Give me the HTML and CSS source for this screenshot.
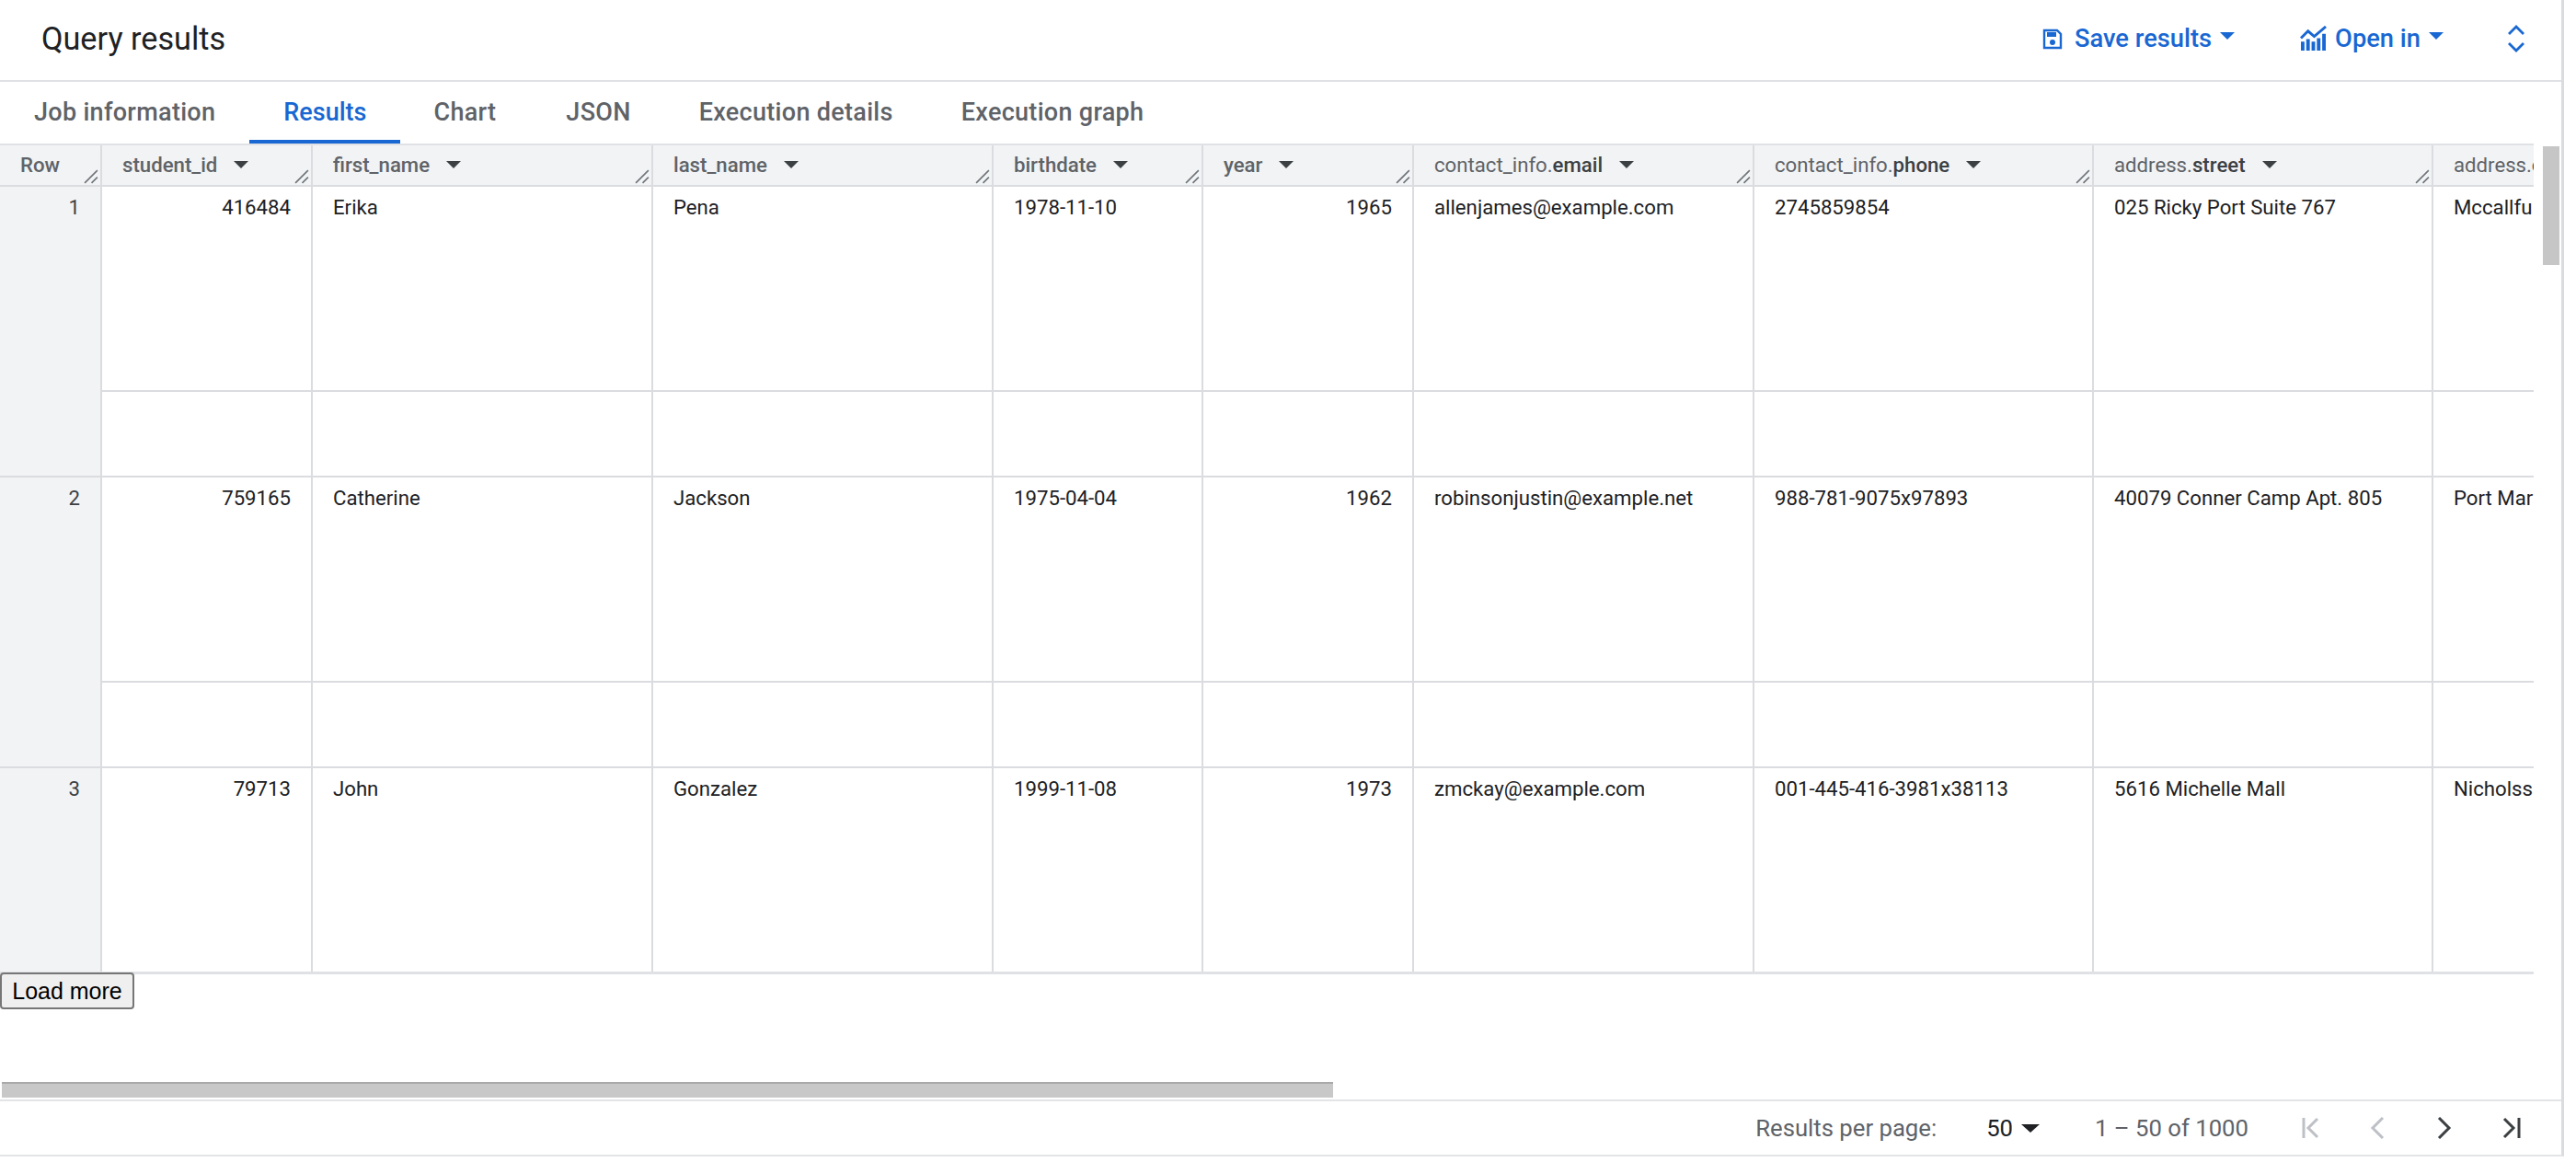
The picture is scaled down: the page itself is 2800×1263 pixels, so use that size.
FILE: index.html
```html
<!DOCTYPE html>
<html lang="en">
<head>
<meta charset="utf-8">
<title>Query results</title>
<link rel="stylesheet" href="styles.css">
</head>
<body>
<svg class="defs" width="0" height="0" aria-hidden="true">
  <symbol id="grip" viewBox="0 0 16 16"><path d="M1 15 14 2M8 15l6-6" fill="none" stroke="#70757a" stroke-width="1.5"/></symbol>
</svg>
<main class="panel">
  <header class="topbar">
    <h1 class="title">Query results</h1>
    <div class="actions">
      <button class="action action-save">
        <svg class="ic-save" viewBox="0 0 22 24"><path fill="none" stroke="#1967d2" stroke-width="2.4" d="M2 3h14l4 4v15H2z"/><path fill="#1967d2" d="M5 5h10v5H5z"/><circle cx="11" cy="16" r="3" fill="#1967d2"/></svg>
        <span>Save results</span><i class="caret"></i>
      </button>
      <button class="action action-open">
        <svg class="ic-chart" viewBox="0 0 30 28"><path fill="#1967d2" d="M1 18h4v10H1zM7 15h4v13H7zM13 18h4v10h-4zM19 14h4v14h-4zM25 9h4v19h-4z"/><path fill="none" stroke="#1967d2" stroke-width="3" d="m1 14 8-8 7 6L29 1"/></svg>
        <span>Open in</span><i class="caret"></i>
      </button>
      <svg class="ic-expand" viewBox="0 0 20 30"><path fill="none" stroke="#1967d2" stroke-width="2.8" d="m2 10 8-8 8 8M2 20l8 8 8-8"/></svg>
    </div>
  </header>

  <nav class="tabs">
    <a class="tab">Job information</a>
    <a class="tab active">Results</a>
    <a class="tab tab-chart">Chart</a>
    <a class="tab">JSON</a>
    <a class="tab">Execution details</a>
    <a class="tab">Execution graph</a>
  </nav>

  <section class="results">
    <div class="results-main">
      <div class="table-clip">
        <table class="grid">
          <colgroup>
            <col class="w111"><col class="w229"><col class="w370"><col class="w370"><col class="w228"><col class="w229"><col class="w370"><col class="w369"><col class="w369"><col class="w370">
          </colgroup>
          <thead>
            <tr>
              <th class="th-row">Row<svg class="grip"><use href="#grip"/></svg></th>
              <th>student_id<i class="sort"></i><svg class="grip"><use href="#grip"/></svg></th>
              <th>first_name<i class="sort"></i><svg class="grip"><use href="#grip"/></svg></th>
              <th>last_name<i class="sort"></i><svg class="grip"><use href="#grip"/></svg></th>
              <th>birthdate<i class="sort"></i><svg class="grip"><use href="#grip"/></svg></th>
              <th>year<i class="sort"></i><svg class="grip"><use href="#grip"/></svg></th>
              <th><span class="prefix">contact_info.</span><b class="leaf">email</b><i class="sort"></i><svg class="grip"><use href="#grip"/></svg></th>
              <th><span class="prefix">contact_info.</span><b class="leaf">phone</b><i class="sort"></i><svg class="grip"><use href="#grip"/></svg></th>
              <th><span class="prefix">address.</span><b class="leaf">street</b><i class="sort"></i><svg class="grip"><use href="#grip"/></svg></th>
              <th><span class="prefix">address.</span><b class="leaf">city</b></th>
            </tr>
          </thead>
          <tbody>
            <tr class="main-row">
              <td class="num-row" rowspan="2">1</td><td class="num">416484</td><td>Erika</td><td>Pena</td><td>1978-11-10</td><td class="num">1965</td><td>allenjames@example.com</td><td>2745859854</td><td>025 Ricky Port Suite 767</td><td>Mccallfu</td>
            </tr>
            <tr class="sub-row"><td></td><td></td><td></td><td></td><td></td><td></td><td></td><td></td><td></td></tr>
            <tr class="main-row">
              <td class="num-row" rowspan="2">2</td><td class="num">759165</td><td>Catherine</td><td>Jackson</td><td>1975-04-04</td><td class="num">1962</td><td>robinsonjustin@example.net</td><td>988-781-9075x97893</td><td>40079 Conner Camp Apt. 805</td><td>Port Mar</td>
            </tr>
            <tr class="sub-row"><td></td><td></td><td></td><td></td><td></td><td></td><td></td><td></td><td></td></tr>
            <tr class="main-row">
              <td class="num-row">3</td><td class="num">79713</td><td>John</td><td>Gonzalez</td><td>1999-11-08</td><td class="num">1973</td><td>zmckay@example.com</td><td>001-445-416-3981x38113</td><td>5616 Michelle Mall</td><td>Nicholss</td>
            </tr>
          </tbody>
        </table>
      </div>
      <button class="load-more">Load more</button>
    </div>
    <div class="v-scroll"></div>
  </section>

  <div class="h-scroll"></div>

  <footer class="pager">
    <span class="pager-label">Results per page:</span>
    <span class="pager-size">50<i class="caret dark"></i></span>
    <span class="pager-range">1 – 50 of 1000</span>
    <svg class="pg-icon" viewBox="0 0 24 24"><path fill="none" stroke="#bdc1c6" stroke-width="3" d="M5 1v22M20 2 10 12l10 10"/></svg>
    <svg class="pg-icon" viewBox="0 0 24 24"><path fill="none" stroke="#bdc1c6" stroke-width="3" d="M18 1 7 12l11 11"/></svg>
    <svg class="pg-icon" viewBox="0 0 24 24"><path fill="none" stroke="#3c4043" stroke-width="3" d="m6 1 11 11L6 23"/></svg>
    <svg class="pg-icon last" viewBox="0 0 24 24"><path fill="none" stroke="#3c4043" stroke-width="3" d="m4 2 10 10L4 22M20 1v22"/></svg>
  </footer>
</main>
</body>
</html>
```
FILE: styles.css
```css
* { box-sizing: border-box; }
html, body { margin: 0; background: #fff; }
body { font-family: Roboto, "Liberation Sans", sans-serif; color: #202124; width: 2800px; height: 1263px; overflow: hidden; }
.defs { position: absolute; }
.panel { width: 2787px; height: 1257px; border-right: 3px solid #dadce0; border-bottom: 2px solid #e3e4e6; display: flex; flex-direction: column; }

.topbar { height: 89px; flex: none; border-bottom: 2px solid #dfe1e5; display: flex; align-items: center; justify-content: space-between; padding-left: 45px; }
.title { margin: 0 0 4px; font-size: 34.2px; font-weight: 400; color: #202124; }
.actions { display: flex; align-items: center; padding-right: 39px; margin-bottom: 4px; }
.action { border: 0; background: none; padding: 0; font: 500 27.3px Roboto, sans-serif; color: #1967d2; display: flex; align-items: center; }
.action-open { margin-left: 71px; }
.action-save span { margin-left: 13px; }
.action-open span { margin-left: 9px; }
.ic-save { width: 22px; height: 24px; }
.ic-chart { width: 29px; height: 27px; }
.ic-expand { width: 20px; height: 30px; margin-left: 69px; }
.caret { display: inline-block; margin-left: 9px; margin-bottom: 6px; border: 8px solid transparent; border-top-color: #1967d2; border-bottom: 0; }
.caret.dark { border-top-color: #202124; border-width: 9px 10px 0; margin-bottom: 0; }

.tabs { height: 67px; flex: none; display: flex; }
.tab { padding: 2px 37px 0; display: flex; align-items: center; font-size: 27px; font-weight: 500; letter-spacing: .3px; color: #5f6368; border-bottom: 4px solid transparent; }
.tab.active { color: #1967d2; border-bottom-color: #1967d2; letter-spacing: 0; }
.tab-chart { padding-left: 36px; padding-right: 39px; }

.results { display: flex; flex: none; height: 1020px; }
.results-main { width: 2754px; flex: none; }
.table-clip { width: 2754px; height: 903px; overflow: hidden; border-top: 2px solid #dfe1e5; border-bottom: 3px solid #dfe1e5; }
.grid { table-layout: fixed; border-collapse: separate; border-spacing: 0; width: 3015px; font-size: 22.2px; }
.w111 { width: 111px; }
.w228 { width: 228px; }
.w229 { width: 229px; }
.w369 { width: 369px; }
.w370 { width: 370px; }
.grid th { position: relative; height: 45px; background: #f1f3f4; text-align: left; padding: 0 22px 2px; font-weight: 500; color: #5f6368; border-right: 2px solid #dadce0; border-bottom: 2px solid #dadce0; white-space: nowrap; overflow: hidden; }
.grid th.th-row { padding: 0 0 2px 22px; }
.prefix { font-weight: 400; }
.leaf { font-weight: 500; color: #3c4043; }
.sort { display: inline-block; margin-left: 18px; margin-bottom: 3px; border: 8px solid transparent; border-top-color: #3c4043; border-bottom: 0; vertical-align: middle; }
.grip { position: absolute; right: 1px; bottom: 1px; width: 17px; height: 17px; }
.grid td { vertical-align: top; padding: 9px 22px 0; border-right: 2px solid #dadce0; border-bottom: 2px solid #dadce0; white-space: nowrap; overflow: hidden; color: #202124; line-height: 26px; }
.main-row td { height: 223px; }
.sub-row td { height: 93px; }
.grid td.num { text-align: right; }
.grid td.num-row { background: #f1f3f4; text-align: right; color: #3c4043; }

.load-more { display: block; margin-top: -2px; position: relative; width: 146px; height: 40px; padding: 0; font: 25px "Liberation Sans", Arial, sans-serif; color: #000; background: #efefef; border: 2px solid #767676; border-radius: 4px; }
.v-scroll { width: 18px; height: 129px; margin: 3px 0 0 10px; background: #c6c6c6; }

.h-scroll { flex: none; width: 1447px; height: 17px; margin-left: 2px; margin-bottom: 2px; background: #c8c8c8; border-top: 2px solid #a9a9a9; }

.pager { flex: 1; border-top: 2px solid #e3e4e6; display: flex; align-items: center; justify-content: flex-end; font-size: 25.7px; color: #5f6368; padding-right: 42px; }
.pager-label { margin-right: 54px; }
.pager-size { color: #202124; display: flex; align-items: center; margin-right: 60px; }
.pager-size .caret { margin-left: 9px; }
.pager-range { margin-right: 55px; }
.pg-icon { width: 24px; height: 24px; margin-right: 49px; }
.pg-icon.last { margin-right: 0; }
```
